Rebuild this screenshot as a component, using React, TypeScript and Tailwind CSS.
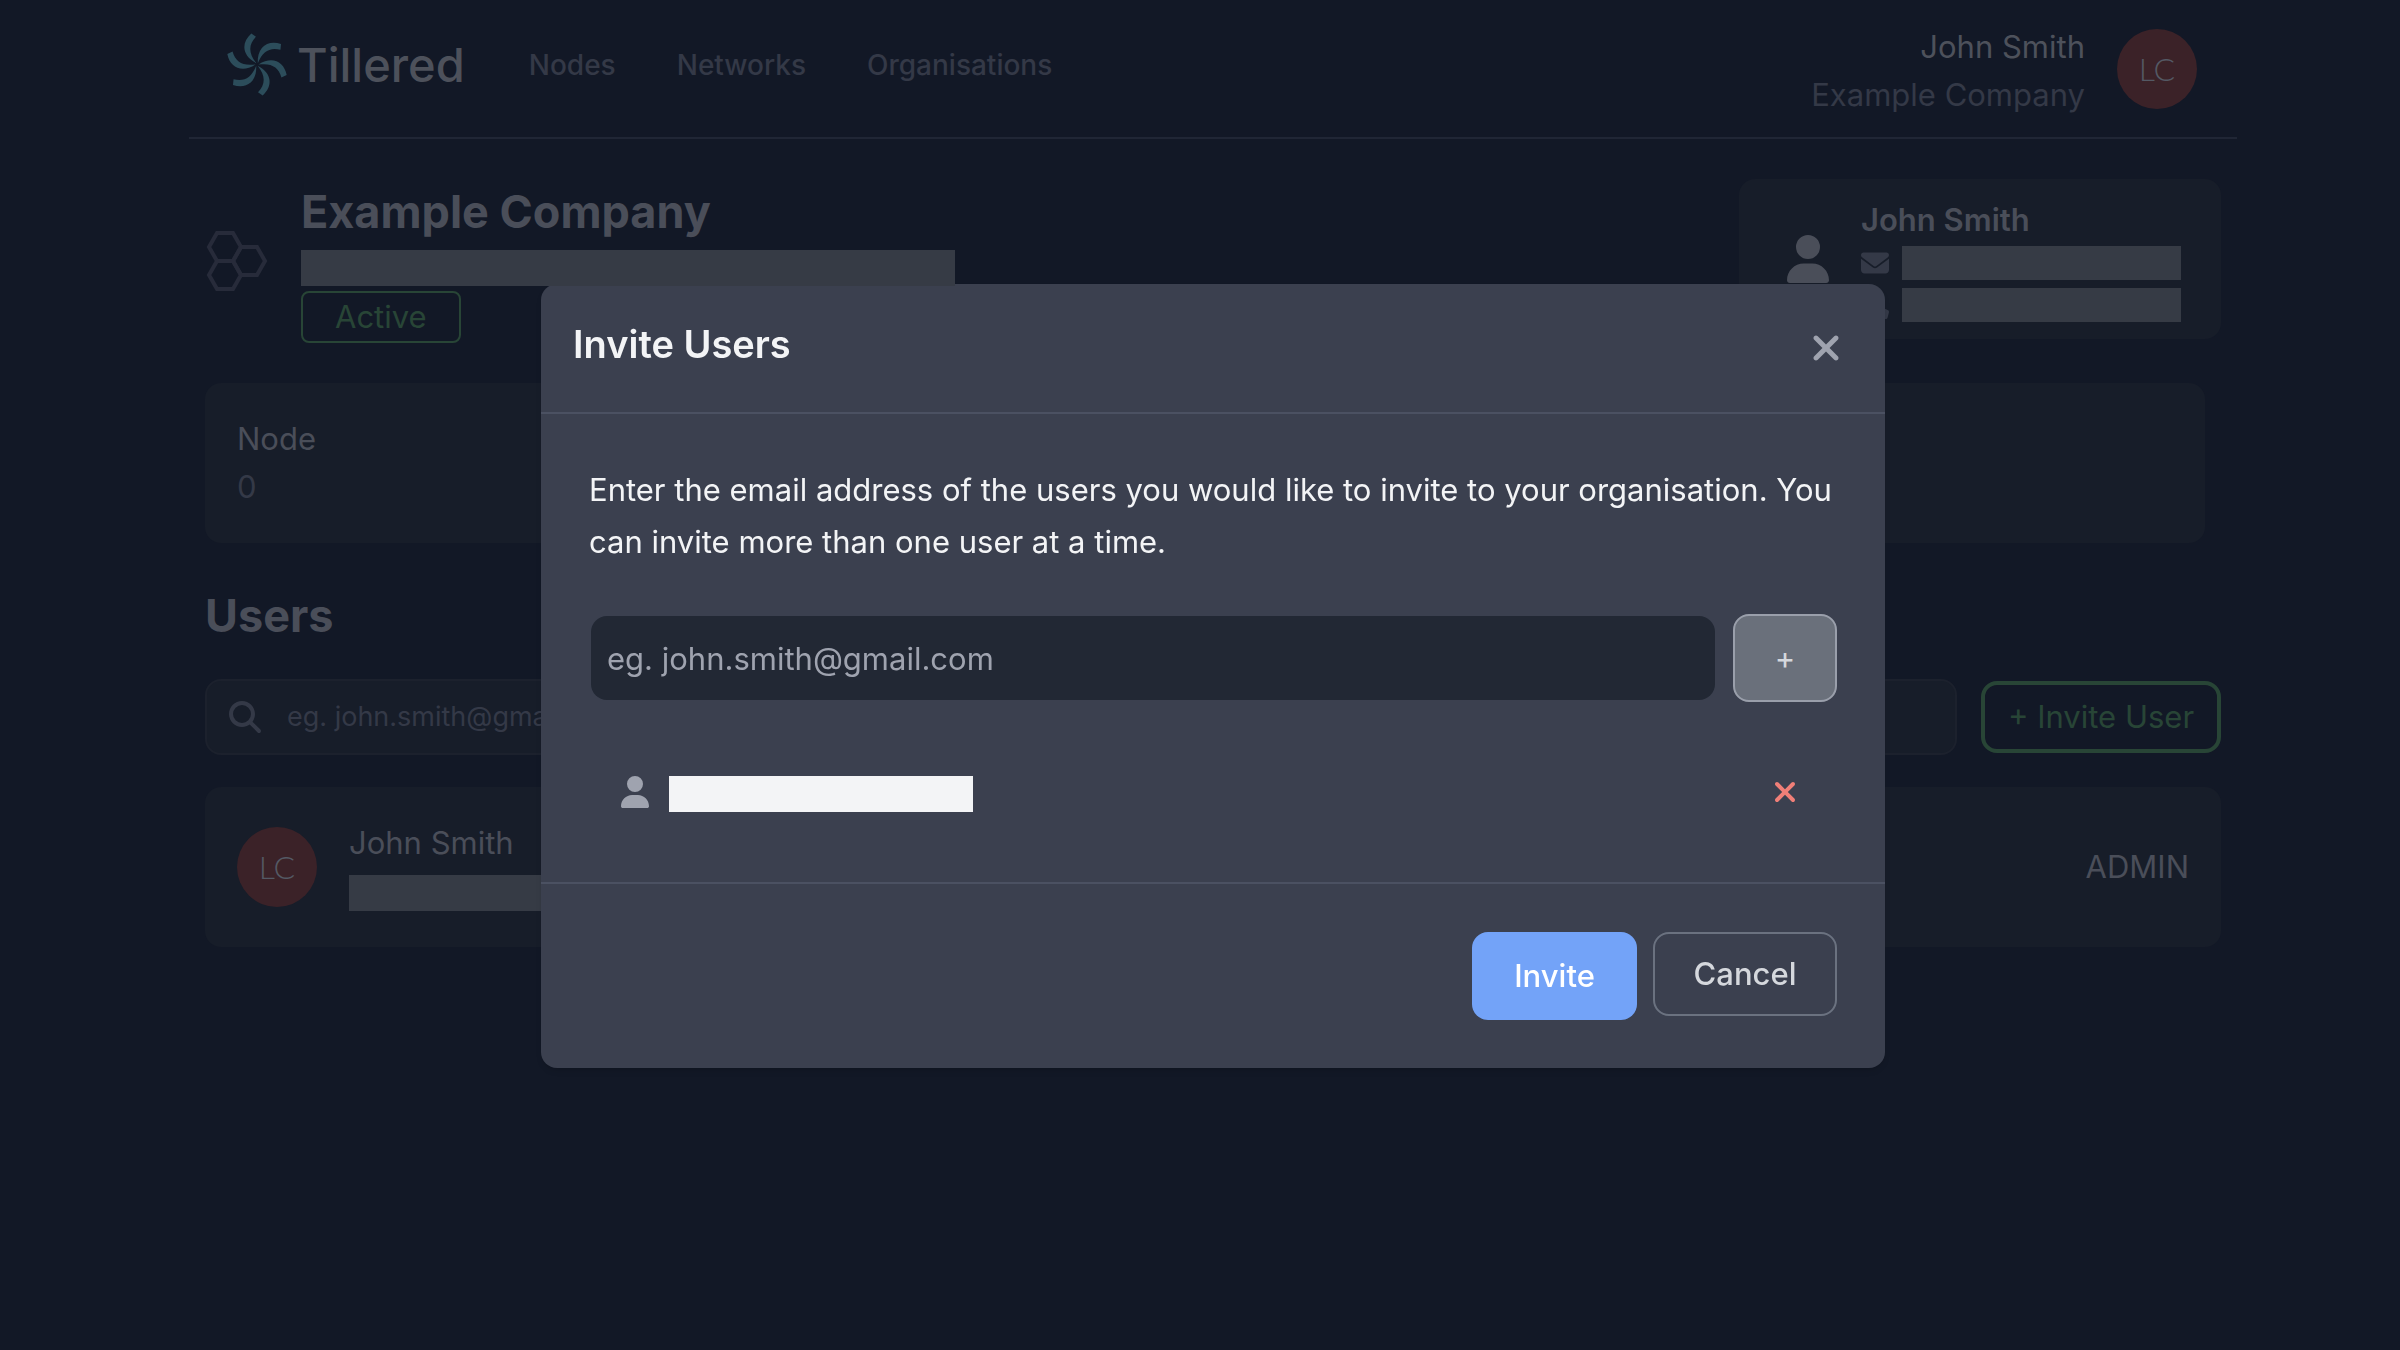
import clsx from "clsx";
import { useState } from "react";
import {
  FaEnvelope,
  FaMagnifyingGlass,
  FaPhone,
  FaUser,
  FaXmark,
} from "react-icons/fa6";

const navLinks = ["Nodes", "Networks", "Organisations"];

function Logo() {
  return (
    <a href="#" className="flex items-center gap-2.5 text-[#4d515b]">
      <svg viewBox="-90 -94 180 188" className="w-[60px] h-[63px]">
        {[0, 60, 120, 180, 240, 300].map((angle) => (
          <path
            key={angle}
            transform={`rotate(${angle})`}
            fill="#2c4d5b"
            d="M-2 -4 C-46 -26 -48 -66 -17 -93 L-3 -83 C-26 -60 -26 -34 -2 -4 Z"
          />
        ))}
      </svg>
      <span className="text-[47px] leading-none font-medium">Tillered</span>
    </a>
  );
}

function Avatar() {
  return (
    <div className="flex size-20 shrink-0 items-center justify-center rounded-full bg-[#3b2228] font-['Lato',sans-serif] text-[32px] font-light text-[#545964]">
      LC
    </div>
  );
}

function Hidden({ className }: { className: string }) {
  return <div className={clsx("bg-[#363b45]", className)} />;
}

function Header() {
  return (
    <header className="flex h-[139px] items-center justify-between border-b-2 border-[#202635] pr-10 pl-[38px]">
      <div className="flex items-center gap-16 pb-2">
        <Logo />
        <nav className="flex gap-[61px] text-[28px] font-medium text-[#343947]">
          {navLinks.map((link) => (
            <a key={link} href="#">
              {link}
            </a>
          ))}
        </nav>
      </div>
      <div className="flex items-center gap-8">
        <div className="pt-1 text-right leading-12">
          <p className="text-[#4d515b]">John Smith</p>
          <p className="text-[#343947]">Example Company</p>
        </div>
        <Avatar />
      </div>
    </header>
  );
}

function Organisation() {
  return (
    <section className="flex items-start justify-between">
      <div className="flex items-center gap-8">
        <svg
          viewBox="-1 0 64 64"
          className="size-16 fill-none stroke-[#272b3a] stroke-4"
        >
          <path d="M11 4 H27 L35 18 L27 32 H11 L3 18 Z" />
          <path d="M11 32 H27 L35 46 L27 60 H11 L3 46 Z" />
          <path d="M35 18 H51 L59 32 L51 46 H35 L27 32 Z" />
        </svg>
        <div>
          <h1 className="mb-1.5 text-[45px] leading-[65px] font-bold text-[#4a4e59]">
            Example Company
          </h1>
          <Hidden className="relative z-20 h-9 w-[654px]" />
          <span className="mt-[5px] inline-block rounded-lg border-2 border-[#284536] px-8 leading-12 text-[#284536]">
            Active
          </span>
        </div>
      </div>
      <div className="flex h-40 w-[482px] items-center gap-8 rounded-2xl bg-[#171d29] pl-12">
        <FaUser className="h-12 w-[42px] text-[#4a4e59]" />
        <div className="flex flex-col gap-2 pt-0.5">
          <h2 className="pt-1 leading-9 font-semibold text-[#4a4e59]">
            John Smith
          </h2>
          <div className="flex items-center gap-[13px] text-[#343947]">
            <FaEnvelope className="size-7" />
            <Hidden className="h-[34px] w-[279px]" />
          </div>
          <div className="flex items-center gap-[13px] text-[#343947]">
            <FaPhone className="size-7" />
            <Hidden className="h-[34px] w-[279px]" />
          </div>
        </div>
      </div>
    </section>
  );
}

function Users({ onInvite }: { onInvite: () => void }) {
  return (
    <section>
      <h2 className="mt-10 text-[45px] leading-[66px] font-bold text-[#4a4e59]">
        Users
      </h2>
      <div className="mt-[30px] flex items-center gap-6">
        <label className="flex h-[76px] flex-1 items-center gap-[26px] rounded-2xl border-2 border-[#1c212d] bg-[#171d29] px-[22px] text-[#343947]">
          <FaMagnifyingGlass className="size-8 shrink-0" />
          <input
            type="text"
            aria-label="Search users"
            placeholder="eg. john.smith@gmail.com"
            className="min-w-0 flex-1 bg-transparent text-[27px] outline-none placeholder:text-[#343947]"
          />
        </label>
        <button
          onClick={onInvite}
          className="h-18 w-60 rounded-2xl border-4 border-[#284536] text-[#284536]"
        >
          + Invite User
        </button>
      </div>
      <div className="mt-8 flex h-40 items-center gap-8 rounded-2xl bg-[#171d29] px-8 text-[#4a4e59]">
        <Avatar />
        <div className="pb-1">
          <p className="mb-2 leading-12">John Smith</p>
          <Hidden className="h-9 w-[480px]" />
        </div>
        <p className="ml-auto">ADMIN</p>
      </div>
    </section>
  );
}

function InviteModal({ onClose }: { onClose: () => void }) {
  const [email, setEmail] = useState("");

  return (
    <div className="fixed inset-0 z-10 flex items-start justify-center pt-[284px] pl-[26px]">
      <div
        role="dialog"
        aria-label="Invite Users"
        className="w-[1344px] rounded-2xl bg-[#3b404f] text-[#f3f4f6] shadow-md"
      >
        <div className="flex h-[130px] items-start justify-between border-b-2 border-[#4b5162] px-8 pt-8">
          <h2 className="text-[38px] leading-14 font-semibold">Invite Users</h2>
          <button
            aria-label="Close"
            onClick={onClose}
            className="mt-3 mr-[7px] text-[#9fa3af]"
          >
            <FaXmark className="size-10" />
          </button>
        </div>

        <div className="border-b-2 border-[#4b5162] px-12 pt-[50px] pb-[70px]">
          <p className="leading-[52px]">
            Enter the email address of the users you would like to invite to
            your organisation. You can invite more than one user at a time.
          </p>
          <div className="mt-[46px] flex items-center gap-[18px] pl-0.5">
            <input
              type="email"
              aria-label="Email address"
              value={email}
              onChange={(e) => setEmail(e.target.value)}
              placeholder="eg. john.smith@gmail.com"
              className="h-[84px] min-w-0 flex-1 rounded-2xl bg-[#222834] px-4 outline-none placeholder:text-[#9fa3af]"
            />
            <button
              aria-label="Add user"
              className="h-22 w-26 rounded-2xl border-2 border-[#9a9fab] bg-[#6a707b] text-[#d5d8dd]"
            >
              +
            </button>
          </div>
          <ul className="mt-[74px]">
            <li className="flex items-start pr-9 pl-8">
              <FaUser className="h-8 w-7 text-[#9fa3af]" />
              <div className="ml-5 h-9 w-[304px] bg-[#f3f4f6]" />
              <button aria-label="Remove user" className="ml-auto">
                <FaXmark className="size-8 text-[#f07f78]" />
              </button>
            </li>
          </ul>
        </div>

        <div className="flex items-start justify-end gap-4 p-12 font-medium">
          <button className="h-22 w-[165px] rounded-2xl bg-[#73a3f8] text-white">
            Invite
          </button>
          <button
            onClick={onClose}
            className="h-[84px] w-[184px] rounded-2xl border-2 border-[#6b7280] text-[#d5d8dd]"
          >
            Cancel
          </button>
        </div>
      </div>
    </div>
  );
}

export default function App() {
  const [isInviteOpen, setIsInviteOpen] = useState<boolean>(true);

  return (
    <div className="min-h-screen bg-[#121826] pl-[26px] font-['Inter',sans-serif] text-[31px]">
      <div className="mx-auto max-w-[2048px]">
        <Header />
        <main className="px-4 pt-10">
          <Organisation />
          <section className="mt-10 mr-4 h-40 rounded-2xl bg-[#171d29] p-8 leading-12">
            <p className="text-[#4a4e59]">Node</p>
            <p className="text-[#343947]">0</p>
          </section>
          <Users onInvite={() => setIsInviteOpen(true)} />
        </main>
      </div>
      {isInviteOpen && <InviteModal onClose={() => setIsInviteOpen(false)} />}
    </div>
  );
}
